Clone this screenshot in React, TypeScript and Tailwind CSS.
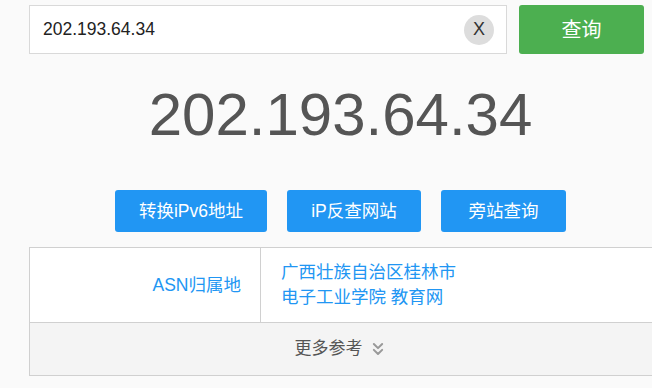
import { ChevronsDown } from "lucide-react";

const font = { fontFamily: '"Liberation Sans", "Noto Sans CJK SC", sans-serif' };

export default function App() {
  const ip = "202.193.64.34";
  return (
    <div className="w-[652px] h-[388px] overflow-hidden bg-[#fafafa] pl-[29px]" style={font}>
      {/* search bar */}
      <div className="flex pt-[5px]">
        <div className="flex h-[49px] w-[478px] items-center border border-[#d9d9d9] bg-white pl-[13px] pr-[12px]">
          <span className="flex-1 text-[17.5px] text-[#222]">{ip}</span>
          <span className="flex h-[30px] w-[30px] items-center justify-center rounded-full bg-[#dddddd] text-[18px] text-[#333]">
            X
          </span>
        </div>
        <button className="ml-[12px] h-[49px] w-[125px] rounded-[3px] bg-[#4caf50] text-[20px] text-white">
          查询
        </button>
      </div>

      {/* big ip */}
      <div className="mt-[31px] text-center text-[60px] leading-[60px] text-[#555]">{ip}</div>

      {/* actions */}
      <div className="mt-[45px] flex justify-center gap-[20px]">
        <button className="h-[42px] w-[152px] rounded-[3px] bg-[#2196f3] text-[17.5px] text-white">
          转换iPv6地址
        </button>
        <button className="h-[42px] w-[134px] rounded-[3px] bg-[#2196f3] text-[17.5px] text-white">
          iP反查网站
        </button>
        <button className="h-[42px] w-[125px] rounded-[3px] bg-[#2196f3] text-[17.5px] text-white">
          旁站查询
        </button>
      </div>

      {/* result table */}
      <div className="mt-[15px] border-l border-t border-[#d0d0d0]">
        <div className="flex h-[75px] border-b border-[#d0d0d0] bg-white">
          <div className="flex w-[231px] items-center justify-end border-r border-[#d0d0d0] pr-[19px] text-[17.5px] text-[#2196f3]">
            ASN归属地
          </div>
          <div className="flex flex-col justify-center pl-[20px] text-[17.5px] leading-[25px] text-[#2196f3]">
            <span>广西壮族自治区桂林市</span>
            <span>电子工业学院 教育网</span>
          </div>
        </div>
        <div className="flex h-[53px] items-center justify-center border-b border-[#d0d0d0] bg-[#f4f4f4] text-[17px] text-[#555]">
          <span>更多参考</span>
          <ChevronsDown className="ml-[5px] text-[#999]" size={20} strokeWidth={2.4} />
        </div>
      </div>
    </div>
  );
}
